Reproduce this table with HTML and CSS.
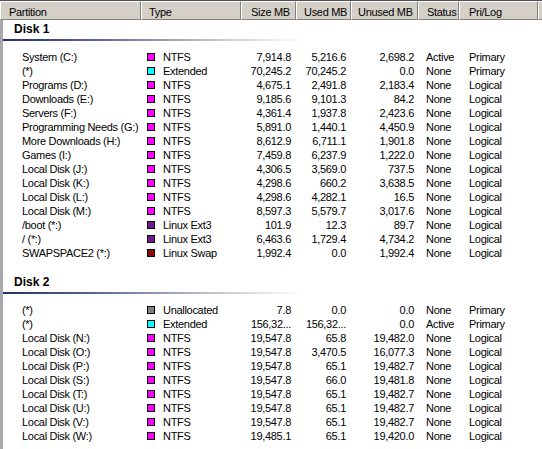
FILE: index.html
```html
<!DOCTYPE html>
<html>
<head>
<meta charset="utf-8">
<link rel="stylesheet" href="styles.css">
</head>
<body>
<div class="win">
  <div class="hdr">
    <div class="hc h-part">Partition</div>
    <div class="hc h-type">Type</div>
    <div class="hc h-size">Size MB</div>
    <div class="hc h-used">Used MB</div>
    <div class="hc h-unused">Unused MB</div>
    <div class="hc h-status">Status</div>
    <div class="hc h-pri">Pri/Log</div>
    <div class="hc h-fill"></div>
  </div>
  <div class="body">
    <div class="disk">
      <div class="disk-title">Disk 1</div>
      <div class="disk-line"></div>
      <div class="rows">
        <div class="row"><span class="c-part">System (C:)</span><span class="c-type"><i class="sq ntfs"></i>NTFS</span><span class="c-size">7,914.8</span><span class="c-used">5,216.6</span><span class="c-unused">2,698.2</span><span class="c-status">Active</span><span class="c-pri">Primary</span></div>
        <div class="row"><span class="c-part">(*)</span><span class="c-type"><i class="sq ext"></i>Extended</span><span class="c-size">70,245.2</span><span class="c-used">70,245.2</span><span class="c-unused">0.0</span><span class="c-status">None</span><span class="c-pri">Primary</span></div>
        <div class="row"><span class="c-part">Programs (D:)</span><span class="c-type"><i class="sq ntfs"></i>NTFS</span><span class="c-size">4,675.1</span><span class="c-used">2,491.8</span><span class="c-unused">2,183.4</span><span class="c-status">None</span><span class="c-pri">Logical</span></div>
        <div class="row"><span class="c-part">Downloads (E:)</span><span class="c-type"><i class="sq ntfs"></i>NTFS</span><span class="c-size">9,185.6</span><span class="c-used">9,101.3</span><span class="c-unused">84.2</span><span class="c-status">None</span><span class="c-pri">Logical</span></div>
        <div class="row"><span class="c-part">Servers (F:)</span><span class="c-type"><i class="sq ntfs"></i>NTFS</span><span class="c-size">4,361.4</span><span class="c-used">1,937.8</span><span class="c-unused">2,423.6</span><span class="c-status">None</span><span class="c-pri">Logical</span></div>
        <div class="row"><span class="c-part">Programming Needs (G:)</span><span class="c-type"><i class="sq ntfs"></i>NTFS</span><span class="c-size">5,891.0</span><span class="c-used">1,440.1</span><span class="c-unused">4,450.9</span><span class="c-status">None</span><span class="c-pri">Logical</span></div>
        <div class="row"><span class="c-part">More Downloads (H:)</span><span class="c-type"><i class="sq ntfs"></i>NTFS</span><span class="c-size">8,612.9</span><span class="c-used">6,711.1</span><span class="c-unused">1,901.8</span><span class="c-status">None</span><span class="c-pri">Logical</span></div>
        <div class="row"><span class="c-part">Games (I:)</span><span class="c-type"><i class="sq ntfs"></i>NTFS</span><span class="c-size">7,459.8</span><span class="c-used">6,237.9</span><span class="c-unused">1,222.0</span><span class="c-status">None</span><span class="c-pri">Logical</span></div>
        <div class="row"><span class="c-part">Local Disk (J:)</span><span class="c-type"><i class="sq ntfs"></i>NTFS</span><span class="c-size">4,306.5</span><span class="c-used">3,569.0</span><span class="c-unused">737.5</span><span class="c-status">None</span><span class="c-pri">Logical</span></div>
        <div class="row"><span class="c-part">Local Disk (K:)</span><span class="c-type"><i class="sq ntfs"></i>NTFS</span><span class="c-size">4,298.6</span><span class="c-used">660.2</span><span class="c-unused">3,638.5</span><span class="c-status">None</span><span class="c-pri">Logical</span></div>
        <div class="row"><span class="c-part">Local Disk (L:)</span><span class="c-type"><i class="sq ntfs"></i>NTFS</span><span class="c-size">4,298.6</span><span class="c-used">4,282.1</span><span class="c-unused">16.5</span><span class="c-status">None</span><span class="c-pri">Logical</span></div>
        <div class="row"><span class="c-part">Local Disk (M:)</span><span class="c-type"><i class="sq ntfs"></i>NTFS</span><span class="c-size">8,597.3</span><span class="c-used">5,579.7</span><span class="c-unused">3,017.6</span><span class="c-status">None</span><span class="c-pri">Logical</span></div>
        <div class="row"><span class="c-part">/boot (*:)</span><span class="c-type"><i class="sq ext3"></i>Linux Ext3</span><span class="c-size">101.9</span><span class="c-used">12.3</span><span class="c-unused">89.7</span><span class="c-status">None</span><span class="c-pri">Logical</span></div>
        <div class="row"><span class="c-part">/ (*:)</span><span class="c-type"><i class="sq ext3"></i>Linux Ext3</span><span class="c-size">6,463.6</span><span class="c-used">1,729.4</span><span class="c-unused">4,734.2</span><span class="c-status">None</span><span class="c-pri">Logical</span></div>
        <div class="row"><span class="c-part">SWAPSPACE2 (*:)</span><span class="c-type"><i class="sq swap"></i>Linux Swap</span><span class="c-size">1,992.4</span><span class="c-used">0.0</span><span class="c-unused">1,992.4</span><span class="c-status">None</span><span class="c-pri">Logical</span></div>
      </div>
    </div>
    <div class="disk">
      <div class="disk-title">Disk 2</div>
      <div class="disk-line"></div>
      <div class="rows">
        <div class="row"><span class="c-part">(*)</span><span class="c-type"><i class="sq unalloc"></i>Unallocated</span><span class="c-size">7.8</span><span class="c-used">0.0</span><span class="c-unused">0.0</span><span class="c-status">None</span><span class="c-pri">Primary</span></div>
        <div class="row"><span class="c-part">(*)</span><span class="c-type"><i class="sq ext"></i>Extended</span><span class="c-size">156,32...</span><span class="c-used">156,32...</span><span class="c-unused">0.0</span><span class="c-status">Active</span><span class="c-pri">Primary</span></div>
        <div class="row"><span class="c-part">Local Disk (N:)</span><span class="c-type"><i class="sq ntfs"></i>NTFS</span><span class="c-size">19,547.8</span><span class="c-used">65.8</span><span class="c-unused">19,482.0</span><span class="c-status">None</span><span class="c-pri">Logical</span></div>
        <div class="row"><span class="c-part">Local Disk (O:)</span><span class="c-type"><i class="sq ntfs"></i>NTFS</span><span class="c-size">19,547.8</span><span class="c-used">3,470.5</span><span class="c-unused">16,077.3</span><span class="c-status">None</span><span class="c-pri">Logical</span></div>
        <div class="row"><span class="c-part">Local Disk (P:)</span><span class="c-type"><i class="sq ntfs"></i>NTFS</span><span class="c-size">19,547.8</span><span class="c-used">65.1</span><span class="c-unused">19,482.7</span><span class="c-status">None</span><span class="c-pri">Logical</span></div>
        <div class="row"><span class="c-part">Local Disk (S:)</span><span class="c-type"><i class="sq ntfs"></i>NTFS</span><span class="c-size">19,547.8</span><span class="c-used">66.0</span><span class="c-unused">19,481.8</span><span class="c-status">None</span><span class="c-pri">Logical</span></div>
        <div class="row"><span class="c-part">Local Disk (T:)</span><span class="c-type"><i class="sq ntfs"></i>NTFS</span><span class="c-size">19,547.8</span><span class="c-used">65.1</span><span class="c-unused">19,482.7</span><span class="c-status">None</span><span class="c-pri">Logical</span></div>
        <div class="row"><span class="c-part">Local Disk (U:)</span><span class="c-type"><i class="sq ntfs"></i>NTFS</span><span class="c-size">19,547.8</span><span class="c-used">65.1</span><span class="c-unused">19,482.7</span><span class="c-status">None</span><span class="c-pri">Logical</span></div>
        <div class="row"><span class="c-part">Local Disk (V:)</span><span class="c-type"><i class="sq ntfs"></i>NTFS</span><span class="c-size">19,547.8</span><span class="c-used">65.1</span><span class="c-unused">19,482.7</span><span class="c-status">None</span><span class="c-pri">Logical</span></div>
        <div class="row"><span class="c-part">Local Disk (W:)</span><span class="c-type"><i class="sq ntfs"></i>NTFS</span><span class="c-size">19,485.1</span><span class="c-used">65.1</span><span class="c-unused">19,420.0</span><span class="c-status">None</span><span class="c-pri">Logical</span></div>
      </div>
    </div>
  </div>
</div>
</body>
</html>
```

FILE: styles.css
```css
html, body {
  margin: 0;
  padding: 0;
  background: #ffffff;
}
body {
  width: 542px;
  height: 449px;
  overflow: hidden;
  font-family: "Liberation Sans", Arial, sans-serif;
  font-size: 11px;
  letter-spacing: -0.3px;
  color: #000;
}
.win {
  width: 542px;
  height: 449px;
  display: flex;
  flex-direction: column;
}
.hdr {
  display: grid;
  grid-template-columns: 141px 100px 55px 55px 67px 41px 79px 4px;
  height: 20px;
  border-top: 1px solid #505050;
  box-sizing: border-box;
  background: #d4d0c8;
}
.hc {
  box-sizing: border-box;
  height: 19px;
  line-height: 13px;
  padding-top: 4px;
  border-top: 1px solid #ffffff;
  border-left: 1px solid #ffffff;
  border-right: 1px solid #808080;
  border-bottom: 1px solid #808080;
  white-space: nowrap;
  overflow: hidden;
}
.h-part { padding-left: 8px; }
.h-type { padding-left: 7px; }
.h-size { padding-left: 9px; }
.h-used { padding-left: 7px; }
.h-unused { padding-left: 6px; }
.h-status { padding-left: 8px; }
.h-pri { padding-left: 9px; }
.h-fill { border-right: none; }
.body {
  flex: 1;
  border-left: 3px solid #a9a7ad;
}
.disk-title {
  font-weight: bold;
  font-size: 12px;
  letter-spacing: 0;
  line-height: 14px;
  padding-top: 2px;
  padding-left: 11px;
}
.disk + .disk {
  margin-top: 13px;
}
.disk-line {
  height: 2px;
  margin-top: 3px;
  background: linear-gradient(90deg, #23306a 0px, #5a6490 90px, #b8bccd 200px, #ffffff 300px);
}
.rows {
  margin-top: 9px;
}
.row {
  display: grid;
  grid-template-columns: 138px 100px 55px 55px 67px 41px 79px;
  height: 14px;
  line-height: 14px;
  white-space: nowrap;
}
.row > span {
  overflow: hidden;
}
.c-part { padding-left: 19px; }
.c-type {
  display: flex;
  align-items: center;
  padding-left: 6px;
}
.c-size, .c-used, .c-unused { text-align: right; }
.c-size { padding-right: 5px; }
.c-used { padding-right: 5px; }
.c-unused { padding-right: 4px; }
.c-status { padding-left: 8px; }
.c-pri { padding-left: 10px; }
.sq {
  display: inline-block;
  width: 8px;
  height: 8px;
  box-sizing: border-box;
  border: 1px solid #000;
  margin-right: 8px;
  flex: none;
}
.ntfs { background: #ff00ff; }
.ext { background: #00ffff; }
.unalloc { background: #808080; }
.ext3 { background: #6c1a8e; }
.swap { background: #8a0c0c; }
```
